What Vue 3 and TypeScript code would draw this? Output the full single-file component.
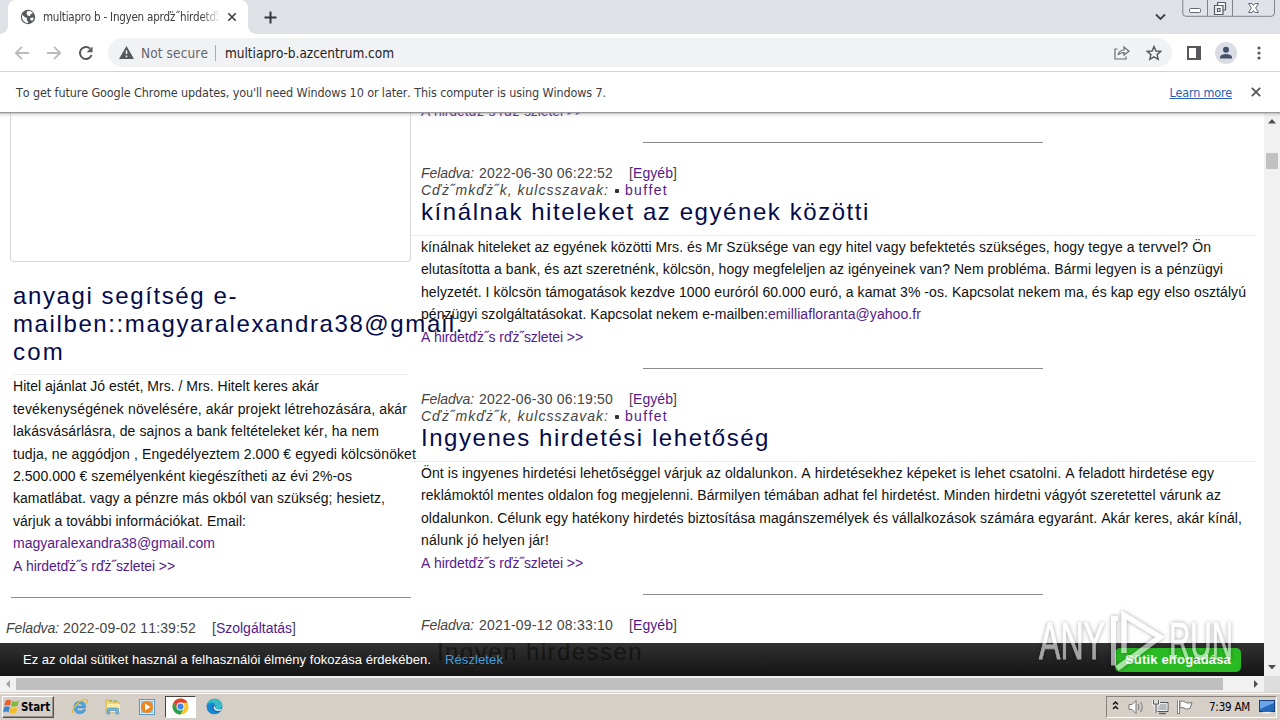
<script setup lang="ts">
import type { Directive } from 'vue'

interface Line { text: string; w: number; link?: boolean; tail?: { text: string; w: number } }
interface Article { date: string; tags: boolean; title: string; titleW: number; lines: Line[] }

// Spreads a line of text over an exact width by adjusting its tracking.
const vFit: Directive<HTMLElement, number> = {
  mounted(el, { value }) {
    const count = Array.from(el.textContent ?? '').length
    const natural = el.getBoundingClientRect().width
    if (count > 0) el.style.letterSpacing = `${(value - natural) / count}px`
  }
}

const more: Line = { text: 'A hirdetďż˝s rďż˝szletei >>', w: 162, link: true }

const articles: Article[] = [
  {
    date: '2022-06-30 06:22:52', tags: true,
    title: 'kínálnak hiteleket az egyének közötti', titleW: 449,
    lines: [
      { text: 'kínálnak hiteleket az egyének közötti Mrs. és Mr Szüksége van egy hitel vagy befektetés szükséges, hogy tegye a tervvel? Ön', w: 790 },
      { text: 'elutasította a bank, és azt szeretnénk, kölcsön, hogy megfeleljen az igényeinek van? Nem probléma. Bármi legyen is a pénzügyi', w: 802 },
      { text: 'helyzetét. I kölcsön támogatások kezdve 1000 euróról 60.000 euró, a kamat 3% -os. Kapcsolat nekem ma, és kap egy elso osztályú', w: 825 },
      { text: 'pénzügyi szolgáltatásokat. Kapcsolat nekem e-mailben:', w: 347, tail: { text: 'emilliafloranta@yahoo.fr', w: 153 } },
      more
    ]
  },
  {
    date: '2022-06-30 06:19:50', tags: true,
    title: 'Ingyenes hirdetési lehetőség', titleW: 349,
    lines: [
      { text: 'Önt is ingyenes hirdetési lehetőséggel várjuk az oldalunkon. A hirdetésekhez képeket is lehet csatolni. A feladott hirdetése egy', w: 793 },
      { text: 'reklámoktól mentes oldalon fog megjelenni. Bármilyen témában adhat fel hirdetést. Minden hirdetni vágyót szeretettel várunk az', w: 800 },
      { text: 'oldalunkon. Célunk egy hatékony hirdetés biztosítása magánszemélyek és vállalkozások számára egyaránt. Akár keres, akár kínál,', w: 821 },
      { text: 'nálunk jó helyen jár!', w: 128 },
      more
    ]
  },
  { date: '2021-09-12 08:33:10', tags: false, title: 'Ingyen hirdessen', titleW: 206, lines: [] }
]

const sideTitle: Line[] = [
  { text: 'anyagi segítség e-', w: 225 },
  { text: 'mailben::magyaralexandra38@gmail.', w: 451 },
  { text: 'com', w: 52 }
]
const sideLines: Line[] = [
  { text: 'Hitel ajánlat Jó estét, Mrs. / Mrs. Hitelt keres akár', w: 306 },
  { text: 'tevékenységének növelésére, akár projekt létrehozására, akár', w: 394 },
  { text: 'lakásvásárlásra, de sajnos a bank feltételeket kér, ha nem', w: 366 },
  { text: 'tudja, ne aggódjon , Engedélyeztem 2.000 € egyedi kölcsönöket', w: 403 },
  { text: '2.500.000 € személyenként kiegészítheti az évi 2%-os', w: 339 },
  { text: 'kamatlábat. vagy a pénzre más okból van szükség; hesietz,', w: 372 },
  { text: 'várjuk a további információkat. Email:', w: 233 },
  { text: 'magyaralexandra38@gmail.com', w: 202, link: true },
  more
]
</script>

<template>
  <div class="screen">
    <header class="tabstrip">
      <div class="tab">
        <svg class="globe" width="16" height="16" viewBox="0 0 16 16"><circle cx="8" cy="8" r="7.2" fill="#55585c" /><path d="M2.2 5.8 L5 8.2 L7.2 9 L6.6 11 L8.3 12.8 L7.5 14.2 Q3 13 2 9Z M7 2.2 L10.4 2 L13 4.3 L10.6 5.2 L10 7.2 L7.2 6.2 L6.6 4.4Z M10 9 L13.8 8.4 L12.8 11.5 L10.8 11.6Z" fill="#fff" /></svg>
        <span class="tabtitle"><span v-fit="178" class="line">multiapro b - Ingyen aprďż˝hirdetďż</span></span>
        <svg class="tabclose" width="10" height="10" viewBox="0 0 10 10"><path d="M1.3 1.3 8.7 8.7M8.7 1.3 1.3 8.7" stroke="#3c4043" stroke-width="1.6" /></svg>
      </div>
      <svg class="plus" width="13" height="13" viewBox="0 0 13 13"><path d="M6.5 .5V12.5M.5 6.5H12.5" stroke="#33363a" stroke-width="2" /></svg>
      <svg class="chev" width="11" height="8" viewBox="0 0 11 8"><path d="M1 1.5 5.5 6 10 1.5" fill="none" stroke="#3c4043" stroke-width="1.8" /></svg>
      <svg class="winctl" width="94" height="18" viewBox="0 0 94 18">
        <path d="M.8 0V13Q.8 16.3 4 16.3H89Q92.5 16.3 92.5 13V0M25.5 0V16M50.500 0V16" fill="#dfe2e8" stroke="#7f848e" />
        <rect x="7.500" y="8.500" width="11" height="4" rx="1" fill="#fff" stroke="#636873" />
        <path d="M35.500 5V3Q35.500 2.500 36 2.500H43Q43.500 2.500 43.500 3V10H41M32.500 5.500H41V14.500H32.500ZM35.500 8.500H38V11.500H35.500Z" fill="#f8f8f9" stroke="#565b66" stroke-width="1.2" />
        <path d="M66.500 3.500H70L71.500 5.500 73 3.500H76.500L73.600 8 76.500 12.500H73L71.500 10.500 70 12.500H66.500L69.400 8Z" fill="#fff" stroke="#666b75" />
      </svg>
    </header>

    <div class="toolbar">
      <svg class="nav" width="84" height="18" viewBox="0 0 84 18" fill="none" stroke="#b9bbbe" stroke-width="1.8"><path d="M15 9H2M8 2.800 1.800 9 8 15.200M33 9H46M40 2.800 46.200 9 40 15.200" /><path d="M76 4.500A6 6 0 1 0 77.600 11" stroke="#55585c" stroke-width="2" /><path d="M78.500 2.500V8.200H72.600Z" fill="#55585c" stroke="none" /></svg>
      <div class="omni">
        <svg width="15" height="13" viewBox="0 0 15 13"><path d="M7.500 0 15 13H0Z" fill="#55585c" /><path d="M7.500 4.500V8M7.500 9.500V11.200" stroke="#fff" stroke-width="1.500" /></svg>
        <span class="notsec"><span v-fit="67" class="line">Not secure</span></span>
        <i class="sep"></i>
        <span v-fit="169" class="line url">multiapro-b.azcentrum.com</span>
        <svg class="share" width="16" height="15" viewBox="0 0 16 15" fill="none" stroke="#686b70" stroke-width="1.200"><path d="M3.500 4H1V14H12V11.500M4 10Q5 5.200 10 5V2L15 6.300 10 10V7.600Q6 7.500 4 10Z" /></svg>
        <svg class="star" width="16" height="16" viewBox="0 0 16 16"><path d="M8 1.500 9.900 6 14.800 6.400 11.100 9.600 12.200 14.300 8 11.800 3.800 14.300 4.900 9.600 1.200 6.400 6.100 6Z" fill="none" stroke="#55585c" stroke-width="1.400" /></svg>
      </div>
      <svg class="panel" width="14" height="14" viewBox="0 0 14 14"><path d="M1 1H13V13H1Z" fill="#fff" stroke="#55585c" stroke-width="2" /><path d="M9 0H14V14H9Z" fill="#55585c" /></svg>
      <svg class="avatar" width="22" height="22" viewBox="0 0 22 22"><circle cx="11" cy="11" r="11" fill="#dadde3" /><circle cx="11" cy="7.800" r="3" fill="#44516b" /><path d="M5 16.500V14.800Q6.500 12 11 12T17 14.800V16.500Z" fill="#44516b" /></svg>
      <svg class="dots" width="4" height="14" viewBox="0 0 4 14" fill="#55585c"><circle cx="2" cy="2" r="1.600" /><circle cx="2" cy="7" r="1.600" /><circle cx="2" cy="12" r="1.600" /></svg>
    </div>

    <div class="infobar">
      <span v-fit="590" class="line">To get future Google Chrome updates, you'll need Windows 10 or later. This computer is using Windows 7.</span>
      <span v-fit="62.500" class="line learn">Learn more</span>
      <svg width="10" height="10" viewBox="0 0 10 10"><path d="M.800 .800 9.200 9.200M9.200 .800 .800 9.200" stroke="#505357" stroke-width="1.700" /></svg>
    </div>

    <div class="view">
      <main class="page">
        <aside class="side">
          <div class="frame"></div>
          <h2 class="stitle"><span v-for="l in sideTitle" :key="l.text" class="row"><span v-fit="l.w" class="line">{{ l.text }}</span></span></h2>
          <div class="sbody">
            <div v-for="l in sideLines" :key="l.text" class="row"><span v-fit="l.w" class="line" :class="{ link: l.link }">{{ l.text }}</span></div>
          </div>
          <hr class="shr">
          <div class="meta smeta">
            <em v-fit="53" class="line">Feladva:</em><span v-fit="133" class="line date">2022-09-02 11:39:52</span><span v-fit="84" class="line">[<b>Szolgáltatás</b>]</span>
          </div>
        </aside>
        <section class="feed">
          <div class="row first"><span v-fit="162" class="line link">{{ more.text }}</span></div>
          <article v-for="a in articles" :key="a.date">
            <hr>
            <div class="meta">
              <em v-fit="53" class="line">Feladva:</em><span v-fit="134" class="line date">{{ a.date }}</span><span v-fit="48" class="line">[<b>Egyéb</b>]</span>
            </div>
            <div v-if="a.tags" class="meta tags">
              <em v-fit="188" class="line">Cďż˝mkďż˝k, kulcsszavak:</em><i class="dot"></i><span v-fit="43" class="line link">buffet</span>
            </div>
            <h2 :class="{ shifted: !a.tags }"><span v-fit="a.titleW" class="line">{{ a.title }}</span></h2>
            <div v-for="l in a.lines" :key="l.text" class="row">
              <span v-fit="l.w" class="line" :class="{ link: l.link }">{{ l.text }}</span><span v-if="l.tail" v-fit="l.tail.w" class="line link">{{ l.tail.text }}</span>
            </div>
          </article>
        </section>
        <div class="cookie">
          <span v-fit="408" class="line">Ez az oldal sütiket használ a felhasználói élmény fokozása érdekében.</span>
          <span v-fit="58" class="line details">Részletek</span>
          <div class="accept"><span v-fit="106" class="line">Sütik elfogadása</span></div>
        </div>
      </main>
      <div class="vscroll">
        <svg width="8" height="5" viewBox="0 0 8 5"><path d="M4 0 8 4.500H0Z" fill="#505050" /></svg>
        <i></i>
        <svg class="down" width="8" height="5" viewBox="0 0 8 5"><path d="M4 4.500 8 0H0Z" fill="#505050" /></svg>
      </div>
      <div class="topshade"></div>
    </div>

    <div class="hscroll">
      <svg width="16" height="16" viewBox="0 0 16 16"><path d="M10 4V12L6 8Z" fill="#a3a3a3" /></svg>
      <i></i>
      <svg class="right" width="16" height="16" viewBox="0 0 16 16"><path d="M6 4V12L10 8Z" fill="#505050" /></svg>
      <b></b>
    </div>

    <footer class="taskbar">
      <div class="start">
        <svg width="17" height="17" viewBox="0 0 16 16"><path d="M2.500 2.500Q5 .800 7.600 2.300L6.600 7.300Q4 6 1.200 7.500Z" fill="#e8612a" /><path d="M8.600 2.800Q11.500 4.200 15 2.500L13.700 7.400Q10.500 9 7.500 7.600Z" fill="#83b83a" /><path d="M1 8.600Q4 7 6.400 8.500L5.300 13.500Q2.500 12 0 13.600Z" fill="#3c83cf" /><path d="M7.300 8.800Q10.500 10.200 13.500 8.600L12.300 13.600Q9 15.200 6.200 13.800Z" fill="#f4bd2a" /></svg>
        <span v-fit="29" class="line">Start</span>
      </div>
      <svg class="app ie" width="18" height="18" viewBox="0 0 18 18"><path d="M14.500 10H5.500Q6 13 9.200 13 11 13 12 11.800H14.800Q13 15.800 9 15.800 3 15.500 2.800 9.500 3 3.500 9 3.200 15.300 3.500 14.500 10ZM5.600 8H11.800Q11.500 5.800 8.800 5.700 6.200 5.800 5.600 8Z" fill="#4ba7df" stroke="#217bb9" stroke-width=".5" /><path d="M2.500 15.500Q-.500 13.500 4.800 7.500 10.500 1 15.200 1.500 17.500 2 15.500 5.500" fill="none" stroke="#e5bd3f" stroke-width="1.300" /></svg>
      <svg class="app folder" width="18" height="18" viewBox="0 0 18 18"><path d="M2 4V2H7L8 4H15V14H2Z" fill="#efd778" stroke="#c6a846" stroke-width=".6" /><path d="M3 6H16V14H3Z" fill="#f8eba7" /><path d="M5 3H8M9.500 3H13" stroke="#62ab5c" /><path d="M3 16V11.500Q3 10 4.500 10H13Q14.500 10 14.500 11.500V16H12V12.500H5.500V16Z" fill="#74b8de" stroke="#4386b2" stroke-width=".6" /></svg>
      <svg class="app wmp" width="18" height="18" viewBox="0 0 18 18"><rect x="1.500" y="1.500" width="15" height="15" fill="#d9ecf7" stroke="#6098bd" /><rect x="3" y="3" width="12" height="12" fill="#8fc4e5" /><circle cx="9" cy="9" r="6" fill="#ef861b" /><path d="M7 5.500 12.500 9 7 12.500Z" fill="#fff" /></svg>
      <div class="active"><svg width="17" height="17" viewBox="0 0 18 18"><circle cx="9" cy="9" r="8.500" fill="#fbc52d" /><path d="M1.640 4.750A8.500 8.500 0 0 1 16.360 4.750L9 5 5.500 11Z" fill="#de4235" /><path d="M1.640 4.750A8.500 8.500 0 0 0 9 17.500L12.500 11H5.500Z" fill="#2f9f50" /><circle cx="9" cy="9" r="4.200" fill="#fff" /><circle cx="9" cy="9" r="3.300" fill="#4285e8" /></svg></div>
      <svg class="app edge" width="17" height="17" viewBox="0 0 18 18"><circle cx="9" cy="9" r="8.300" fill="#1768b8" /><path d="M.800 8Q2 1 9 .700 16.500 1 17.300 7.500 17.300 12 12.500 12 9.500 11.800 10.700 9.500 10.500 6.300 6.500 6.300 2.500 6.300 .800 8Z" fill="#35bcc7" /><path d="M1 7Q5 3.500 9 5.800 6 7 6.300 10.500 7 15 13.500 14.800 10 18 6 16.700 0 14 1 7Z" fill="#1489d2" /><path d="M10 7.500Q9 10 10.500 11.500 13 13 17 11.500L15.500 13.500Q8 14.500 8 9.500Z" fill="#d8e9ec" /></svg>
      <div class="tray">
        <svg width="102" height="20" viewBox="0 0 102 20" fill="none">
          <path d="M6 7.500 8.500 5 11 7.500M6 12 8.500 9.500 11 12" stroke="#111" stroke-width="1.500" />
          <path d="M22 7.500H25L29 3.500V16.500L25 12.500H22Z" fill="#fafafa" stroke="#777" />
          <path d="M31 7Q33 10 31 13M33.500 5Q37 10 33.500 15" stroke="#858585" stroke-width="1.200" />
          <path d="M50 5.500H61V14.500H50Z" fill="#b6b9bb" stroke="#555" /><path d="M51 6.500H60V13.500H51Z" stroke="#eee" /><path d="M52 16.500H59" stroke="#666" stroke-width="1.500" /><path d="M46.500 3V7H51.500V3M49 7V16" stroke="#fff" stroke-width="3" /><path d="M46.500 3V7H51.500V3M49 7V16" stroke="#555" stroke-width="1.200" />
          <path d="M71.500 3V17" stroke="#777" stroke-width="3" /><path d="M71.500 3V16" stroke="#fff" stroke-width="1.200" /><path d="M73 4.500Q76 3 78 5 80 7 85 5.500L83 11.500Q79 13 77 11 75 10 73 11Z" fill="#fafafa" stroke="#777" />
        </svg>
        <span v-fit="41" class="line clock">7:39 AM</span>
        <svg class="desk" width="16" height="15" viewBox="0 0 16 15"><rect x=".500" y="1.500" width="15" height="11" fill="#2569bd" stroke="#17407b" /><path d="M1 2H15V4L1 10Z" fill="#6aa6e7" /><path d="M4 13.500H12" stroke="#f0f0f0" stroke-width="1.500" /></svg>
      </div>
    </footer>

    <svg class="mark" width="210" height="76" viewBox="0 0 210 76">
      <g class="glow" fill="#fff" stroke="#fff">
        <text x="8" y="54" font-size="51" stroke-width=".8" textLength="66" lengthAdjust="spacingAndGlyphs">ANY</text>
        <text x="138" y="54" font-size="51" stroke-width=".8" textLength="64" lengthAdjust="spacingAndGlyphs">RUN</text>
        <path d="M93 48V10L129 32 86 63.500" fill="none" stroke-width="5.500" />
        <path d="M87 13.500H82.500V60.500" fill="none" stroke-width="5" />
      </g>
    </svg>
  </div>
</template>

<style>
body { margin: 0; overflow: hidden; }
</style>

<style scoped>
* { box-sizing: border-box; }
svg { display: block; flex: none; }
.screen { position: relative; width: 1280px; height: 720px; overflow: hidden; background: #fff; font: 12.5px "DejaVu Sans Condensed", "DejaVu Sans", sans-serif; font-stretch: condensed; color: #3a3c3f; display: flex; flex-direction: column; }
.line { display: inline-block; white-space: pre; flex: none; font-kerning: none; font-variant-ligatures: none; }

.tabstrip { height: 34px; flex: none; background: #dee1e6; display: flex; align-items: center; }
.tab { position: relative; width: 240px; height: 34px; margin-left: 8px; background: #fff; border-radius: 8px 8px 0 0; display: flex; align-items: center; padding: 0 11px 0 12px; }
.tab::before, .tab::after { content: ""; position: absolute; bottom: 0; width: 8px; height: 8px; }
.tab::before { left: -8px; background: radial-gradient(circle at 0 0, transparent 7.5px, #fff 8px); }
.tab::after { right: -8px; background: radial-gradient(circle at 100% 0, transparent 7.5px, #fff 8px); }
.tabtitle { margin-left: 7px; width: 176px; overflow: hidden; font-size: 11.5px; -webkit-mask-image: linear-gradient(90deg, #000 158px, transparent 177px); mask-image: linear-gradient(90deg, #000 158px, transparent 177px); }
.tabclose { margin-left: auto; }
.plus { margin-left: 16px; }
.chev { margin-left: 878px; }
.winctl { margin-left: 16px; align-self: flex-start; }

.toolbar { height: 38px; flex: none; display: flex; align-items: center; border-bottom: 1px solid #d4d6d8; }
.nav { margin-left: 14px; }
.omni { margin-left: 10px; width: 1064px; height: 29px; border-radius: 15px; background: #f0f2f4; display: flex; align-items: center; padding-left: 11px; font-size: 13.5px; }
.notsec { color: #63666b; margin-left: 7px; }
.sep { width: 1px; height: 16px; background: #a9acb0; margin: 0 9px 0 7px; }
.url { color: #1f2124; }
.share { margin-left: auto; }
.star { margin: 0 10px 0 16px; }
.panel { margin-left: 15px; }
.avatar { margin-left: 14px; }
.dots { margin-left: 20px; }

.infobar { height: 40px; flex: none; display: flex; align-items: center; padding: 0 19px 0 16px; }
.learn { margin-left: auto; margin-right: 19px; color: #2863b8; text-decoration: underline; }

.view { position: relative; height: 564px; flex: none; overflow: hidden; display: flex; }
.topshade { position: absolute; left: 0; right: 0; top: 0; height: 6px; background: linear-gradient(#999 0 1px, rgba(120,120,120,.45) 1px, rgba(180,180,180,.2) 3px, transparent); }
.page { position: relative; width: 1264px; height: 564px; overflow: hidden; display: flex; font: 14px/22.4px "Liberation Sans", Arial, sans-serif; color: #111; }
.side { width: 411px; flex: none; position: relative; }
.frame { height: 150px; margin: 0 0 0 10px; width: 401px; border: 1px solid #d8d8d8; border-top: 0; border-radius: 0 0 4px 4px; }
h2 { margin: 0; font-weight: 400; font-size: 24px; line-height: 28px; color: #050a4a; }
.stitle { margin: 20px 3px 0 13px; height: 93px; border-bottom: 1px solid #ececec; }
.stitle .row { height: 28px; display: block; }
.sbody { margin-left: 13px; padding-top: .4px; }
.row { height: 22.4px; white-space: nowrap; }
hr { margin: 20px 0 0 222px; width: 400px; height: 1px; border: 0; background: #8c8c8c; }
.shr { margin: 19.6px 0 0 11px; }
.link, .meta b { color: #551a8b; font-weight: 400; }
.meta { display: flex; height: 16.5px; line-height: 17px; color: #444; }
.smeta { margin: 22px 0 0 6px; }
.date { margin: 0 16px 0 5px; }
.smeta .date { margin: 0 16px 0 4px; }
.dot { width: 4px; height: 4px; margin: 7px 6px 0 6px; background: #333; border-radius: 1px; }
.feed { width: 843px; margin-left: 10px; flex: none; margin-top: -12px; }
.feed .first { margin-bottom: -.4px; }
article .meta { height: 16px; }
hr + .meta { margin-top: 22px; height: 17px; }
article h2 { height: 38px; margin-left: -10px; padding-left: 10px; width: 844px; border-bottom: 1px solid #ececec; }
article h2.shifted { padding: 4px 0 0 26px; border: 0; color: #222; }

.cookie { position: absolute; left: 0; right: 0; bottom: 0; height: 33px; background: linear-gradient(rgba(27,27,27,.9), rgba(5,5,5,.94)); display: flex; align-items: center; color: #fff; padding: 0 23px; font-size: 13px; line-height: 18px; }
.details { color: #459bd8; margin-left: 14px; }
.accept { margin-left: auto; width: 126px; height: 24px; background: #2abb24; border-radius: 5px; font-weight: 700; display: flex; align-items: center; justify-content: center; }

.vscroll { width: 16px; background: #f1f1f1; display: flex; flex-direction: column; align-items: center; padding: 7px 0 6px; }
.vscroll i { width: 12px; height: 16px; background: #c1c1c1; margin-top: 29px; }
.vscroll .down { margin-top: auto; }
.hscroll { height: 16px; flex: none; background: #f1f1f1; display: flex; align-items: center; }
.hscroll i { width: 1207px; height: 12px; background: #bfbfbf; }
.hscroll .right { margin-left: auto; }
.hscroll b { width: 16px; height: 16px; background: #dcdcdc; }

.taskbar { height: 28px; flex: none; background: #d6cfc8; border-top: 1px solid #d4d0c8; box-shadow: inset 0 1px #fff; display: flex; align-items: center; padding: 1px 3px 1px 2px; }
.start { width: 52px; height: 22px; border: 1px solid; border-color: #fff #55524e #55524e #fff; box-shadow: inset -1px -1px #96918b; display: flex; align-items: center; gap: 1px; color: #000; font-weight: 700; font-size: 11.5px; }
.ie { margin-left: 17px; }
.folder { margin-left: 15px; }
.wmp { margin-left: 16px; }
.active { width: 31px; height: 22px; margin-left: 9px; background: #fff; border: 1px solid; border-color: #444 #fff #fff #444; display: flex; align-items: center; justify-content: center; }
.edge { margin-left: 10px; }
.tray { margin-left: auto; width: 171px; height: 22px; border: 1px solid; border-color: #88837d #fff #fff #88837d; display: flex; align-items: center; color: #000; font-size: 11.5px; }
.desk { margin-left: auto; margin-right: 1px; }

.mark { position: absolute; left: 1031px; top: 605px; font-family: "Liberation Sans", Arial, sans-serif; }
.glow { opacity: .58; filter: drop-shadow(0 0 2px rgba(0, 0, 0, .6)); }
</style>
